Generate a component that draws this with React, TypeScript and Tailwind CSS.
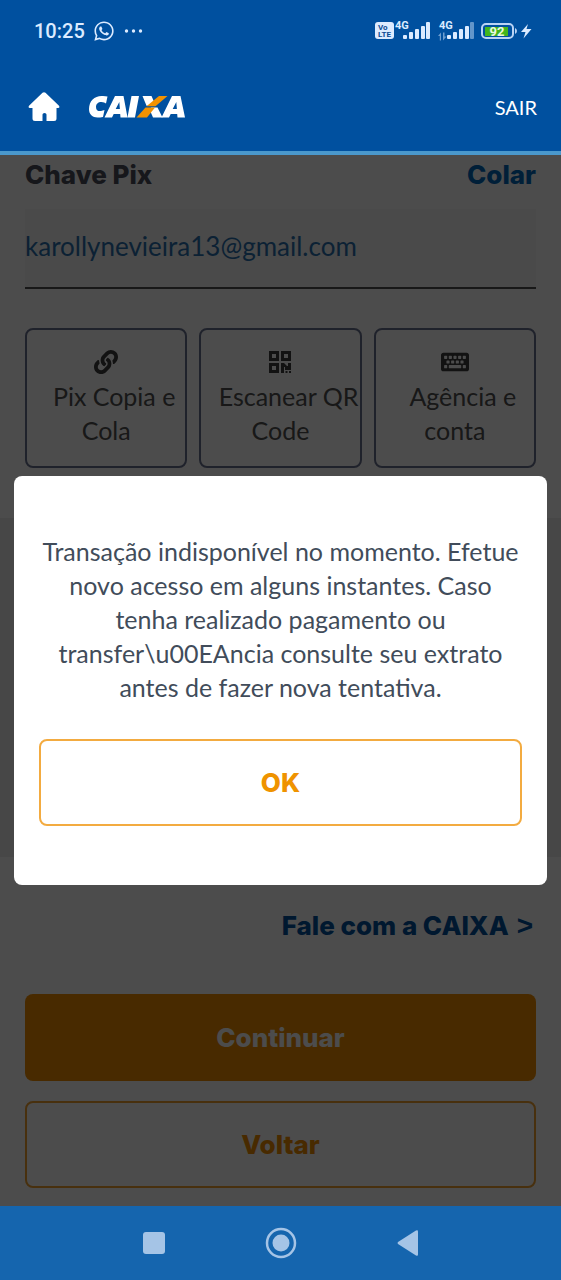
import { FaLink, FaKeyboard, FaWhatsapp } from "react-icons/fa";
import type { ReactNode } from "react";

function Signal({ faded, updown }: { faded?: boolean; updown?: boolean }) {
  return (
    <svg width="36" height="24" viewBox="0 0 36 24" fill="#dcebff" aria-label="4G" className="overflow-visible">
      <text x="-1" y="10" fontSize="11" fontWeight="700" fontFamily="Roboto, sans-serif">4G</text>
      {updown && (
        <g opacity="0.5">
          <path d="M-2 17l3-3.500v8h-1.200v-4.500z" />
          <path d="M3 13.500v8l3.500-4h-2v-4z" />
        </g>
      )}
      <rect x="7" y="16" width="4" height="4" rx="1" />
      <rect x="13" y="13" width="4" height="7" rx="1" />
      <rect x="19" y="10" width="4" height="10" rx="1" />
      <rect x="25" y="7" width="4" height="13" rx="1" />
      <rect x="30" y="3" width="4" height="17" rx="1" opacity={faded ? 0.45 : 1} />
    </svg>
  );
}

function StatusBar() {
  return (
    <div className="flex h-[62px] items-center justify-between pr-[29px] pl-[34px] text-[#dcebff]">
      <div className="flex items-center gap-2 font-[Roboto,sans-serif] text-xl font-medium">
        <span>10:25</span>
        <FaWhatsapp className="size-[22px]" />
        <svg width="20" height="4" viewBox="0 0 20 4" fill="currentColor">
          <circle cx="3.500" cy="2" r="1.700" />
          <circle cx="10.500" cy="2" r="1.700" />
          <circle cx="17.500" cy="2" r="1.700" />
        </svg>
      </div>
      <div className="flex items-center">
        <svg width="20" height="18" viewBox="0 0 20 18">
          <rect x="0" y="0" width="19" height="17" rx="3" fill="#dcebff" />
          <text x="3" y="8" fontSize="8" fontWeight="700" fontFamily="Roboto, sans-serif" fill="#0a4a94">Vo</text>
          <text x="3" y="15" fontSize="8" fontWeight="700" fontFamily="Roboto, sans-serif" fill="#0a4a94">LTE</text>
        </svg>
        <div className="ml-px flex gap-2">
          <Signal />
          <Signal faded updown />
        </div>
        <svg className="ml-1" width="52" height="18" viewBox="0 0 52 18">
          <rect x="2" y="2" width="31" height="14" rx="4" fill="none" stroke="#b9d3f5" strokeWidth="2" />
          <path d="M35 6v6q2-1 2-3t-2-3z" fill="#b9d3f5" />
          <rect x="5" y="5" width="23" height="9" fill="#42b51c" />
          <text x="17" y="13.500" textAnchor="middle" fontSize="13" fontWeight="700" fontFamily="Roboto, sans-serif" fill="#e9f8e0">92</text>
          <path d="M48 2l-7 8h4.500l-2 6.500 8-9.500h-5z" fill="#dcebff" />
        </svg>
      </div>
    </div>
  );
}

function HomeIcon() {
  return (
    <svg width="32" height="32" viewBox="0 0 32 32" fill="currentColor">
      <path d="M14.500 1.800Q16 .8 17.500 1.800L31 14.800Q32.200 17 30 17H28.500V27.500Q28.500 30 26 30H18.500V23.500Q18.500 22 16.500 22Q14.500 22 14.500 23.500V30H7Q4.500 30 4.500 27.500V17H2Q-.2 17 1 14.800z" />
    </svg>
  );
}

function CaixaLogo() {
  return (
    <svg width="98" height="24" viewBox="0 0 98 24" role="img" aria-label="CAIXA" fill="#fff">
      <path d="M19.500 1.500 18 8.500Q16.500 7 13.500 7C10 7 8 9 8 12C8 15.500 10.500 16.500 13 16L16.500 15 15 22Q12 22.500 9.500 22.500C4.500 22.500 1 19.500 1 14C1 6 6.500 1 13.500 1Q17 .8 19.500 1.500z" />
      <path fillRule="evenodd" d="M27 1h8.500l4 21.500h-7l-.3-3.500h-6.500l-1.700 3.500h-7.500zM27.700 14h4.200l-.6-7z" />
      <path d="M43.500 1h7.500l-4 21.500h-7.500z" />
      <path d="M54.500 1h9l4 9-4 .8h-5z" />
      <path d="M63 12.500h6.500l5 10h-9.500l-3-7z" />
      <path d="M71 1h8.500L67.500 11.300H58.500z" fill="#f39200" />
      <path d="M57.500 12.500h9.500l-8 10h-10.500z" fill="#f39200" />
      <path fillRule="evenodd" d="M84 1h8.500l4.500 21.500h-7.500l-.3-3.500h-6.500l-1.700 3.500h-7.500zM84.700 14h4.200l-.6-7z" />
    </svg>
  );
}

function QrIcon() {
  return (
    <svg width="24" height="24" viewBox="0 0 24 24" fill="currentColor">
      <path fillRule="evenodd" d="M1 1h10v10H1zM4 4v4h4V4zM13 1h10v10H13zM16 4v4h4V4zM1 13h10v10H1zM4 16v4h4v-4z" />
      <path d="M13 13h3l3 3h1v-3h3v7h-6v-3h-1v6h-3zM17.500 21h2v2h-2zM21 21h2v2h-2z" />
    </svg>
  );
}

function Option({ icon, children }: { icon: ReactNode; children: ReactNode }) {
  return (
    <button className="flex h-[140px] min-w-0 flex-1 flex-col items-center rounded-lg border-2 border-[#6a7290] pt-5 text-[25px] text-[#505050]">
      <span className="flex h-6 items-center text-[#3c3c3c]">{icon}</span>
      <span className="pt-[5px] leading-[34px] whitespace-nowrap">{children}</span>
    </button>
  );
}

export default function App() {
  return (
    <div className="flex min-h-screen flex-col bg-white font-[Lato,sans-serif]">
      <header className="border-b-4 border-[#4a98cc] bg-[#00509f]">
        <StatusBar />
        <div className="flex h-[89px] items-center justify-between pr-6 pl-7">
          <div className="flex items-center gap-7">
            <a href="#inicio" aria-label="Início" className="text-white">
              <HomeIcon />
            </a>
            <CaixaLogo />
          </div>
          <button className="text-xl text-white">SAIR</button>
        </div>
      </header>

      <main className="relative flex-1">
        <div className="flex flex-col">
          <div className="flex h-[54px] items-start justify-between px-[25px] pt-[3px] font-[Inter,sans-serif] text-[26px] leading-[34px] font-extrabold">
            <label htmlFor="chave" className="text-[#4a4d5d]">Chave Pix</label>
            <button className="text-[#0068bd]">Colar</button>
          </div>
          <div className="px-[25px]">
            <input
              id="chave"
              type="text"
              defaultValue="karollynevieira13@gmail.com"
              className="h-20 w-full border-b-2 border-[#505050] bg-[#f8f8f8] pb-1 text-[26px] text-[#2b71ae]"
            />
          </div>
          <div className="flex gap-3 px-[25px] pt-[39px] pb-[50px]">
            <Option icon={<FaLink className="size-6" />}>
              <span className="pl-4">Pix Copia e</span><br />Cola
            </Option>
            <Option icon={<QrIcon />}>
              <span className="pl-4">Escanear QR</span><br />Code
            </Option>
            <Option icon={<FaKeyboard className="size-7" />}>
              <span className="pl-4">Agência e</span><br />conta
            </Option>
          </div>
          <div className="h-[339px] bg-[#efefef]" />
          <div className="flex h-[137px] justify-end px-[28px] pt-[52px]">
            <a href="#contato" className="flex gap-2 font-[Inter,sans-serif] text-[26px] leading-[34px] font-extrabold text-[#00509f]">
              <span>Fale com a CAIXA</span>
              <span className="font-['Liberation_Sans',sans-serif] text-[28px] font-bold">&gt;</span>
            </a>
          </div>
          <div className="flex flex-col gap-5 px-[25px] pb-[17px] font-[Inter,sans-serif] text-[26px] font-extrabold">
            <button className="h-[87px] rounded-lg bg-[#f08c00] text-white">Continuar</button>
            <button className="h-[87px] rounded-lg border-2 border-[#f0a030] text-[#f08c00]">Voltar</button>
          </div>
        </div>

        <div className="absolute inset-0 flex items-center justify-center bg-black/70 px-[14px]">
          <div role="dialog" aria-modal="true" aria-labelledby="aviso" className="flex w-full flex-col rounded-lg bg-white px-[25px] pt-[58px] pb-[59px]">
            <p id="aviso" className="text-center text-[25px] leading-[34px] text-[#414c5a]">
              Transação indisponível no momento. Efetue<br />
              novo acesso em alguns instantes. Caso<br />
              tenha realizado pagamento ou<br />
              transfer\u00EAncia consulte seu extrato<br />
              antes de fazer nova tentativa.
            </p>
            <button className="mt-[35px] h-[87px] rounded-lg border-2 border-[#f3ab40] font-[Inter,sans-serif] text-[26px] font-extrabold text-[#ef9300]">OK</button>
          </div>
        </div>
      </main>

      <nav className="grid h-[74px] grid-cols-3 items-center justify-items-center bg-[#1565ae] px-[90px] text-[#a5c4e6]">
        <button aria-label="Recentes">
          <svg width="24" height="24" viewBox="0 0 24 24" fill="currentColor"><rect x="1" y="1" width="22" height="22" rx="3" /></svg>
        </button>
        <button aria-label="Início">
          <svg width="32" height="32" viewBox="0 0 32 32" fill="currentColor">
            <circle cx="16" cy="16" r="14" fill="none" stroke="currentColor" strokeWidth="2.500" />
            <circle cx="16" cy="16" r="8.500" />
          </svg>
        </button>
        <button aria-label="Voltar">
          <svg width="24" height="28" viewBox="0 0 24 28" fill="currentColor"><path d="M2 13 20 1.500q2-1 2 1v23q0 2-2 1L2 15q-1-1 0-2z" /></svg>
        </button>
      </nav>
    </div>
  );
}
